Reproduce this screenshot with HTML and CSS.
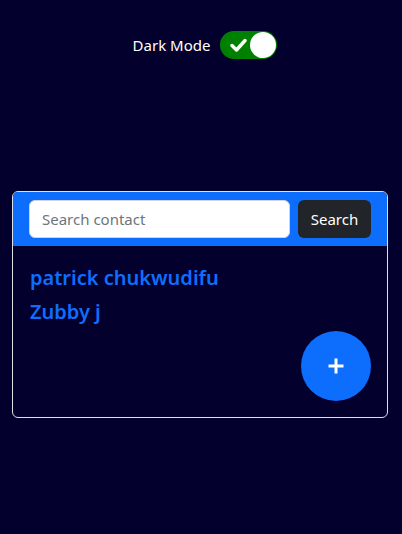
FILE: index.html
```html
<!DOCTYPE html>
<html>
<head>
<meta charset="utf-8">
<link rel="stylesheet" href="styles.css">
</head>
<body>
<div class="page">
  <div class="mode">
    <span class="mode-label">Dark Mode</span>
    <div class="toggle">
      <svg class="check" width="17" height="14" viewBox="0 0 17 14"><path d="M2 7.5 L6.5 12 L15 2.5" fill="none" stroke="#fff" stroke-width="3.4" stroke-linecap="round" stroke-linejoin="round"/></svg>
      <span class="knob"></span>
    </div>
  </div>
  <div class="card">
    <div class="card-head">
      <input class="search" type="text" placeholder="Search contact">
      <button class="btn">Search</button>
    </div>
    <div class="card-body">
      <div class="contact">patrick chukwudifu</div>
      <div class="contact">Zubby j</div>
      <div class="fab-row">
        <div class="fab"><svg width="18" height="18" viewBox="0 0 18 18"><path d="M9 1.5 V16.5 M1.5 9 H16.5" stroke="#fff" stroke-width="3" fill="none"/></svg></div>
      </div>
    </div>
  </div>
</div>
</body>
</html>
```
FILE: styles.css
```css
* { box-sizing: border-box; }
html, body { margin: 0; height: 100%; }
body {
  background: #04002e;
  font-family: "Noto Sans", "Open Sans", sans-serif;
  color: #fff;
}
.page { padding: 31px 14px 0 12px; }
.mode {
  display: flex;
  justify-content: center;
  align-items: center;
  gap: 10px;
  margin-left: 10px;
}
.mode-label { font-size: 15px; }
.toggle {
  width: 57px;
  height: 28px;
  border-radius: 14px;
  background: #008000;
  display: flex;
  align-items: center;
  justify-content: space-between;
  padding: 0 1px 0 10px;
}
.knob {
  width: 26px;
  height: 26px;
  border-radius: 50%;
  background: #fff;
}
.card {
  margin-top: 132px;
  border: 1px solid #dee2e6;
  border-radius: 6px;
  overflow: hidden;
}
.card-head {
  background: #0d6efd;
  display: flex;
  gap: 8px;
  padding: 8px 16px 8px 16px;
}
.search {
  flex: 1;
  height: 38px;
  border: 1px solid #ced4da;
  border-radius: 6px;
  padding: 0 12px;
  font-family: inherit;
  font-size: 15px;
  color: #212529;
}
.search::placeholder { color: #6c757d; }
.btn {
  height: 38px;
  width: 73px;
  border: none;
  border-radius: 6px;
  background: #212529;
  color: #fff;
  font-family: inherit;
  font-size: 15px;
}
.card-body {
  padding: 19px 16px 16px 17px;
}
.contact {
  color: #0d6efd;
  font-size: 20px;
  font-weight: 600;
  line-height: 26px;
  margin-bottom: 8px;
}
.fab-row {
  display: flex;
  justify-content: flex-end;
  margin-top: -2px;
}
.fab {
  width: 70px;
  height: 70px;
  border-radius: 50%;
  background: #0d6efd;
  display: flex;
  align-items: center;
  justify-content: center;
}
```
